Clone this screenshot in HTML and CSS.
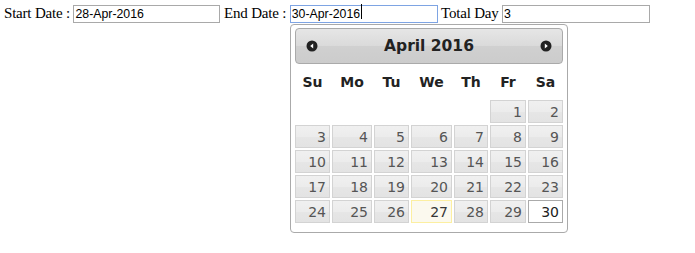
FILE: index.html
```
<!DOCTYPE html>
<html lang="en">
<head>
<title>Date Range</title>
<meta charset="utf-8">
<link rel="stylesheet" href="styles.css">
</head>
<body>

<div class="line">
  Start Date : <input type="text" class="txt start" value="28-Apr-2016"> End Date : <span class="focuswrap"><input type="text" class="txt end focused" value="30-Apr-2016"><span class="caret"></span></span> Total Day <input type="text" class="txt total" value="3">
</div>

<!-- DATEPICKER POPUP UNDER END DATE -->
<div class="picker">
  <div class="pick-head">
    <span class="nav prev">
      <svg width="12" height="12" viewBox="0 0 12 12"><circle cx="6" cy="6" r="5.5" fill="#222"/><polygon points="7.2,3.6 7.2,8.4 4.2,6" fill="#fff"/></svg>
    </span>
    <span class="title">April 2016</span>
    <span class="nav next">
      <svg width="12" height="12" viewBox="0 0 12 12"><circle cx="6" cy="6" r="5.5" fill="#222"/><polygon points="4.8,3.6 4.8,8.4 7.8,6" fill="#fff"/></svg>
    </span>
  </div>
  <table class="cal">
    <colgroup>
      <col style="width:37px"><col style="width:42px"><col style="width:37px"><col style="width:43px"><col style="width:36px"><col style="width:38px"><col style="width:37px">
    </colgroup>
    <thead>
      <tr><th>Su</th><th>Mo</th><th>Tu</th><th>We</th><th>Th</th><th>Fr</th><th>Sa</th></tr>
    </thead>
    <tbody>
      <tr><td></td><td></td><td></td><td></td><td></td><td><a>1</a></td><td><a>2</a></td></tr>
      <tr><td><a>3</a></td><td><a>4</a></td><td><a>5</a></td><td><a>6</a></td><td><a>7</a></td><td><a>8</a></td><td><a>9</a></td></tr>
      <tr><td><a>10</a></td><td><a>11</a></td><td><a>12</a></td><td><a>13</a></td><td><a>14</a></td><td><a>15</a></td><td><a>16</a></td></tr>
      <tr><td><a>17</a></td><td><a>18</a></td><td><a>19</a></td><td><a>20</a></td><td><a>21</a></td><td><a>22</a></td><td><a>23</a></td></tr>
      <tr><td><a>24</a></td><td><a>25</a></td><td><a>26</a></td><td><a class="today">27</a></td><td><a>28</a></td><td><a>29</a></td><td><a class="active">30</a></td></tr>
    </tbody>
  </table>
</div>

</body>
</html>
```

FILE: styles.css
```
* {
  box-sizing: border-box;
}

body {
  margin: 0;
  padding: 4px 4px;
  font-family: "Liberation Serif", "Times New Roman", serif;
  font-size: 15px;
  color: #000;
  background: #fff;
}

.line {
  line-height: 18px;
  white-space: nowrap;
  letter-spacing: -0.2px;
}

/* text boxes */
.txt {
  height: 18px;
  padding: 0 1px;
  margin: 0;
  border: 1px solid #a9a9a9;
  font-family: "Liberation Sans", Arial, sans-serif;
  font-size: 12.3px;
  letter-spacing: 0;
  color: #000;
  vertical-align: baseline;
  outline: none;
}

.start { width: 147px; }
.end { width: 148px; }
.total { width: 148px; }

.focused {
  border-color: #7ea4e3;
}

.focuswrap {
  position: relative;
}

.caret {
  position: absolute;
  left: 71px;
  top: -1px;
  width: 1px;
  height: 15px;
  background: #000;
}

/* datepicker */
.picker {
  position: absolute;
  left: 290px;
  top: 24px;
  width: 278px;
  padding: 3px 4px 8px 4px;
  border: 1px solid #aaa;
  border-radius: 4px;
  background: #fff;
  font-family: "DejaVu Sans", Verdana, sans-serif;
  color: #222;
}

.pick-head {
  position: relative;
  height: 36px;
  border: 1px solid #aaa;
  border-radius: 4px;
  background: linear-gradient(to bottom, #e6e6e6 0%, #dadada 50%, #d0d0d0 51%, #cccccc 100%);
  text-align: center;
}

.title {
  display: block;
  line-height: 34px;
  font-size: 15.5px;
  font-weight: bold;
  color: #222;
}

.nav {
  position: absolute;
  top: 11px;
  width: 12px;
  height: 12px;
  line-height: 0;
}

.prev { left: 10px; }
.next { right: 10px; }

.cal {
  width: calc(100% + 2px);
  margin: 0 -1px;
  border-collapse: collapse;
  table-layout: fixed;
  font-size: 14px;
}

.cal th {
  height: 35px;
  padding: 0;
  font-weight: bold;
  text-align: center;
  color: #222;
}

.cal td {
  padding: 1px;
  height: 25px;
}

.cal td a {
  display: block;
  height: 23px;
  padding: 2px 3px 0 0;
  text-align: right;
  line-height: 18px;
  border: 1px solid #d3d3d3;
  background: linear-gradient(to bottom, #f0f0f0 0%, #ececec 50%, #e6e6e6 51%, #e3e3e3 100%);
  color: #555;
}

.cal td a.today {
  border-color: #fcefa1;
  background: #fbf9ee;
  color: #363636;
}

.cal td a.active {
  border-color: #aaa;
  background: #fff;
  color: #212121;
}
```
